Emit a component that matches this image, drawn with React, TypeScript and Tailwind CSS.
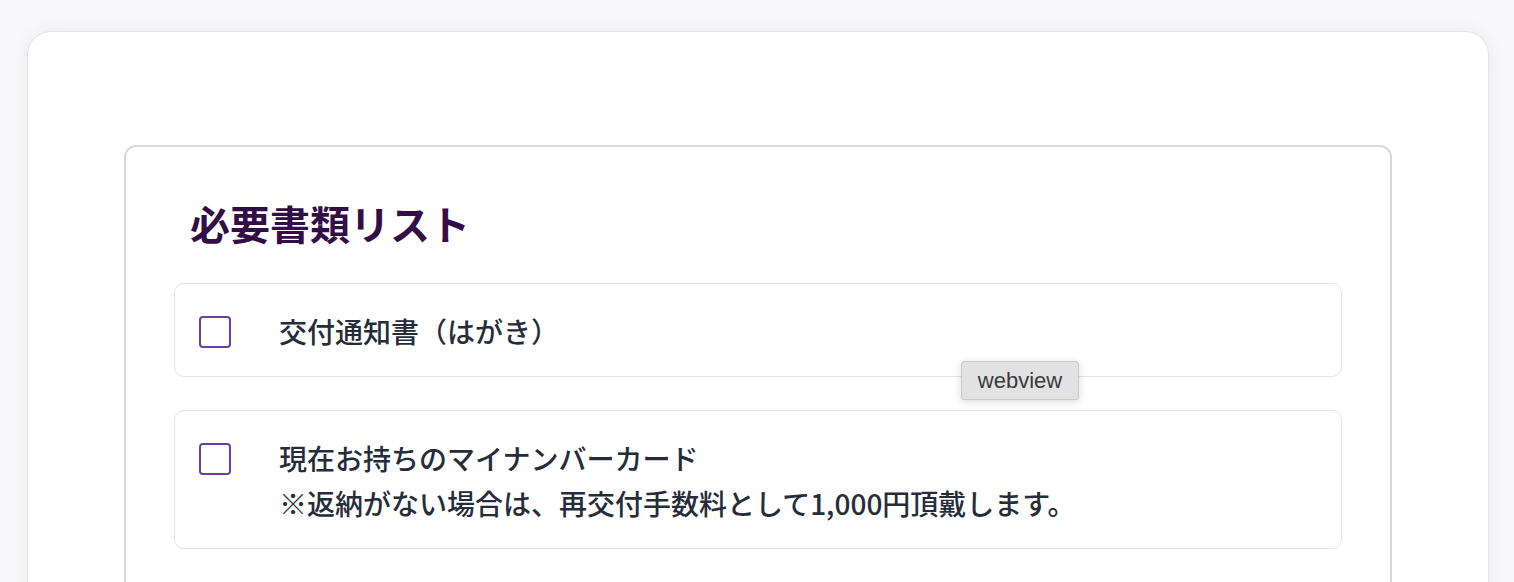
import React from "react"

const items = [
  { id: "notice", lines: ["交付通知書（はがき）"] },
  {
    id: "card",
    lines: ["現在お持ちのマイナンバーカード", "※返納がない場合は、再交付手数料として1,000円頂戴します。"],
  },
]

export default function App() {
  return (
    <div
      className="relative min-h-screen bg-[#f8f7fa] pl-[27px] pr-[25px] pt-[31px] overflow-hidden"
      style={{ fontFamily: '"Noto Sans CJK JP", "Noto Sans", sans-serif' }}
    >
      <div className="rounded-t-[24px] border border-[#e4e3e9] bg-white px-[96px] pt-[113px] pb-16 shadow-[0_0_18px_rgba(40,30,70,0.06)]">
        <div className="rounded-xl border-2 border-[#d8dadf] bg-white px-12 pt-12 pb-12">
          <h2 className="px-4 text-[40px] leading-[56px] font-bold text-[#330d47] mb-8">必要書類リスト</h2>
          <div className="flex flex-col gap-[33px]">
            {items.map((item) => (
              <label
                key={item.id}
                className="flex items-start gap-12 rounded-[10px] border border-[#e3e3e8] bg-white px-6 pt-[25px] pb-[22px]"
              >
                <input type="checkbox" className="sr-only" />
                <span className="mt-[7px] block h-8 w-8 shrink-0 rounded-[4px] border-2 border-[#6a3f9e] bg-white" />
                <span className="text-[28px] leading-[45px] font-medium text-[#262d3a]">
                  {item.lines.map((line) => (
                    <span key={line} className="block">
                      {line}
                    </span>
                  ))}
                </span>
              </label>
            ))}
          </div>
        </div>
      </div>

      <div
        className="absolute left-[961px] top-[361px] flex h-[39px] w-[118px] items-center justify-center rounded-[3px] border border-[#cacaca] bg-[#e2e2e2] text-[22px] text-[#3a3a3a] shadow-[0_2px_8px_rgba(0,0,0,0.15)]"
        style={{ fontFamily: '"Liberation Sans", Arial, sans-serif' }}
      >
        webview
      </div>
    </div>
  )
}
